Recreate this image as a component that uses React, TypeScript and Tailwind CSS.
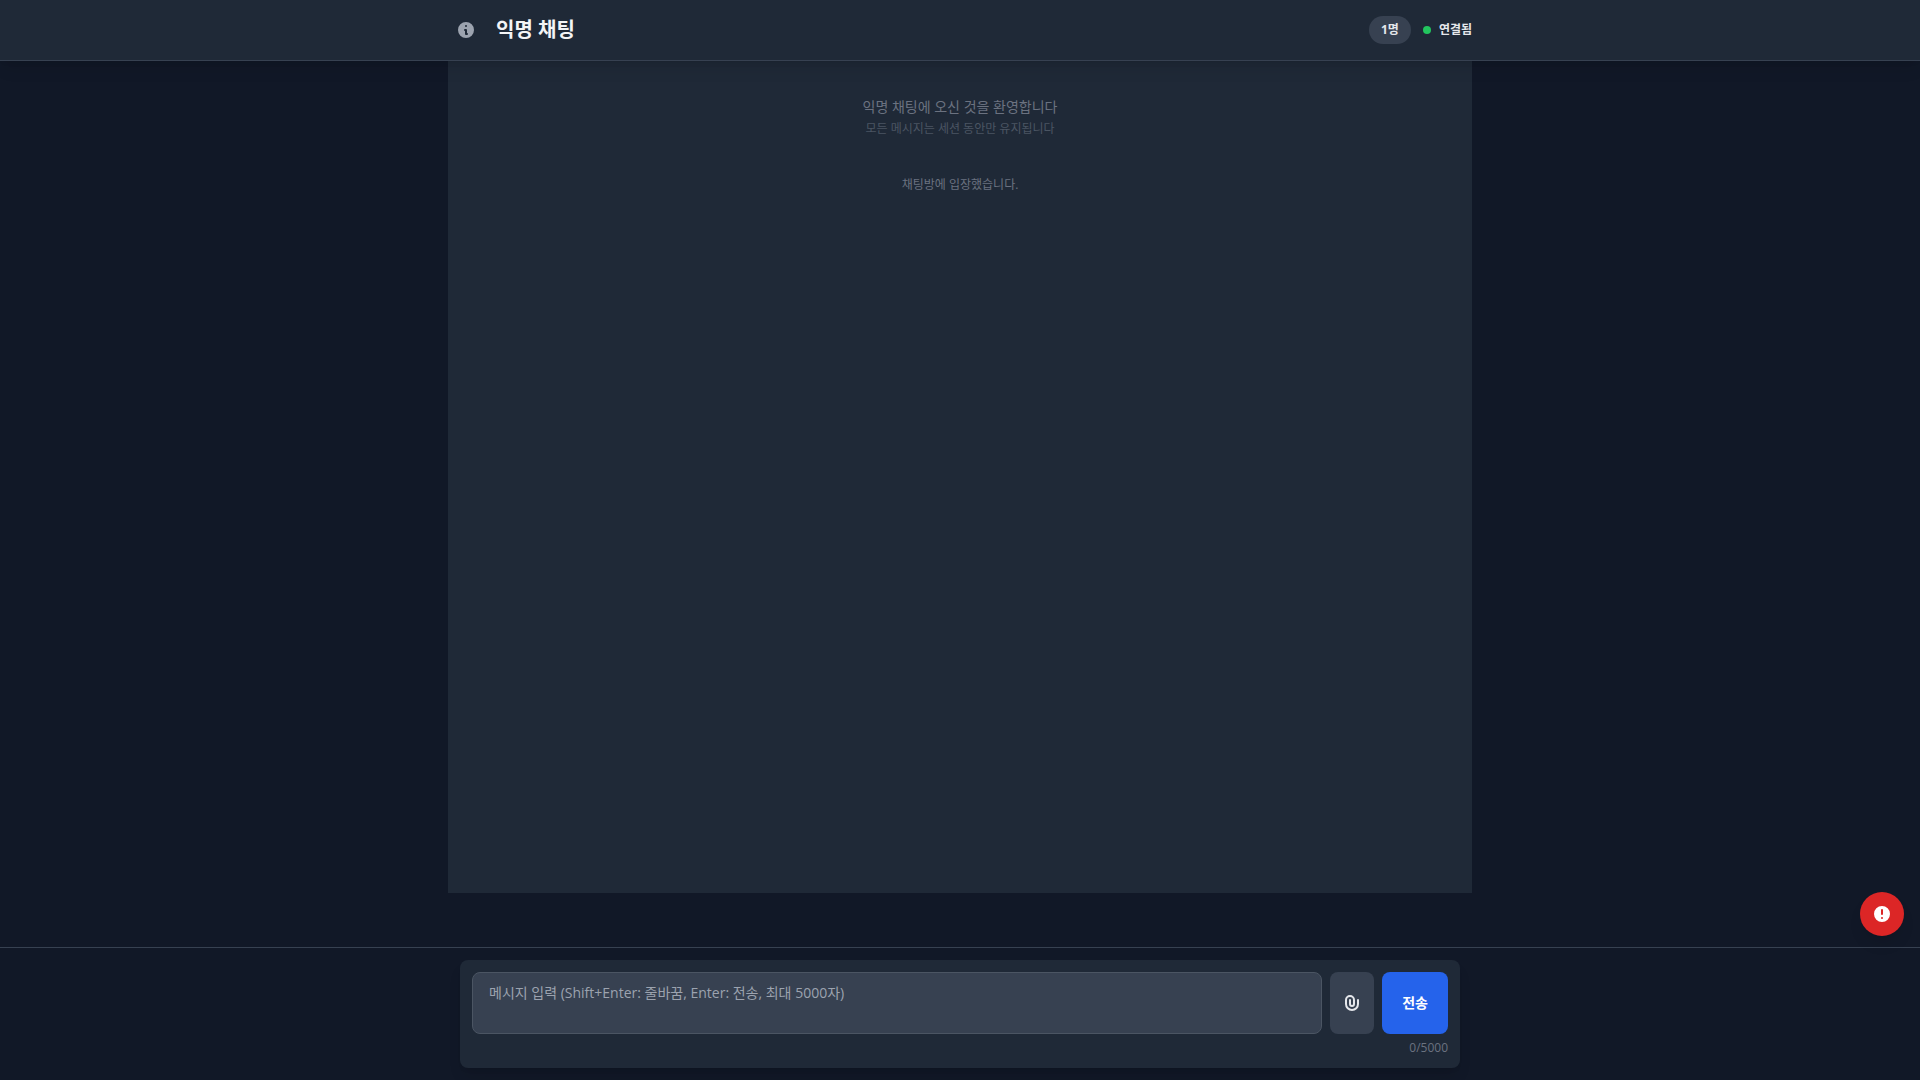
import React, { useState } from "react";

const MAX_LENGTH = 5000;

const Header = () => {
  return (
    <header className="relative z-10 border-b border-[#374151] bg-[#1f2937] shadow-lg">
      <div className="mx-auto flex w-full max-w-5xl items-center justify-between py-3">
        <div className="flex items-center gap-3">
          <button
            type="button"
            aria-label="정보"
            className="rounded-full p-2 text-[#9ca3af] hover:bg-[#374151]"
          >
            <svg className="h-5 w-5" viewBox="0 0 20 20" fill="currentColor">
              <path
                fillRule="evenodd"
                clipRule="evenodd"
                d="M18 10a8 8 0 11-16 0 8 8 0 0116 0zm-7-4a1 1 0 11-2 0 1 1 0 012 0zM9 9a1 1 0 000 2v3a1 1 0 001 1h1a1 1 0 100-2v-3a1 1 0 00-1-1H9z"
              />
            </svg>
          </button>
          <h1 className="text-xl font-bold text-[#f3f4f6]">익명 채팅</h1>
        </div>
        <div className="flex items-center gap-3 text-xs font-bold text-[#e5e7eb]">
          <span className="rounded-full bg-[#374151] px-3 py-1.5">1명</span>
          <div className="flex items-center gap-2">
            <span className="h-2 w-2 rounded-full bg-[#22c55e]" />
            <span>연결됨</span>
          </div>
        </div>
      </div>
    </header>
  );
};

const Composer = () => {
  const [message, setMessage] = useState("");

  return (
    <footer className="border-t border-[#374151] bg-[#111827] py-3">
      <div className="mx-auto w-full max-w-5xl px-3">
        <form
          onSubmit={(e) => e.preventDefault()}
          className="rounded-lg bg-[#1f2937] p-3 shadow-lg"
        >
          <div className="flex gap-2">
            <textarea
              aria-label="메시지"
              rows={2}
              maxLength={MAX_LENGTH}
              value={message}
              onChange={(e) => setMessage(e.target.value)}
              placeholder="메시지 입력 (Shift+Enter: 줄바꿈, Enter: 전송, 최대 5000자)"
              className="flex-1 resize-none rounded-lg border border-[#4b5563] bg-[#374151] px-4 py-2.5 text-sm text-[#f3f4f6] placeholder:text-[#9ca3af] focus:outline-none"
            />
            <button
              type="button"
              aria-label="파일 첨부"
              className="rounded-lg bg-[#374151] px-3 text-[#e5e7eb]"
            >
              <svg className="h-5 w-5" viewBox="0 0 20 20" fill="currentColor">
                <path
                  fillRule="evenodd"
                  clipRule="evenodd"
                  d="M8 4a3 3 0 00-3 3v4a5 5 0 0010 0V7a1 1 0 112 0v4a7 7 0 11-14 0V7a5 5 0 0110 0v4a3 3 0 11-6 0V7a1 1 0 012 0v4a1 1 0 102 0V7a3 3 0 00-3-3z"
                />
              </svg>
            </button>
            <button
              type="submit"
              className="rounded-lg bg-[#2563eb] px-5 text-sm font-bold text-white"
            >
              전송
            </button>
          </div>
          <p className="mt-1.5 text-right text-xs text-[#6b7280]">
            {message.length}/{MAX_LENGTH}
          </p>
        </form>
      </div>
    </footer>
  );
};

const App = () => {
  return (
    <div className="flex h-screen flex-col bg-[#111827] font-['Open_Sans','Noto_Sans_CJK_KR',sans-serif]">
      <Header />

      <main className="mx-auto mb-[54px] w-full max-w-5xl flex-1 overflow-y-auto bg-[#1f2937] p-4 text-center">
        <div className="py-5">
          <p className="text-sm text-[#6b7280]">익명 채팅에 오신 것을 환영합니다</p>
          <p className="mt-1 text-xs text-[#4b5563]">
            모든 메시지는 세션 동안만 유지됩니다
          </p>
        </div>
        <p className="my-5 text-xs text-[#6b7280]">채팅방에 입장했습니다.</p>
      </main>

      <Composer />

      <button
        type="button"
        aria-label="신고"
        className="fixed right-4 bottom-36 rounded-full bg-[#dc2626] p-3 text-white shadow-lg"
      >
        <svg className="h-5 w-5" viewBox="0 0 20 20" fill="currentColor">
          <path
            fillRule="evenodd"
            clipRule="evenodd"
            d="M18 10a8 8 0 11-16 0 8 8 0 0116 0zm-7 4a1 1 0 11-2 0 1 1 0 012 0zm-1-9a1 1 0 00-1 1v4a1 1 0 102 0V6a1 1 0 00-1-1z"
          />
        </svg>
      </button>
    </div>
  );
};

export default App;
